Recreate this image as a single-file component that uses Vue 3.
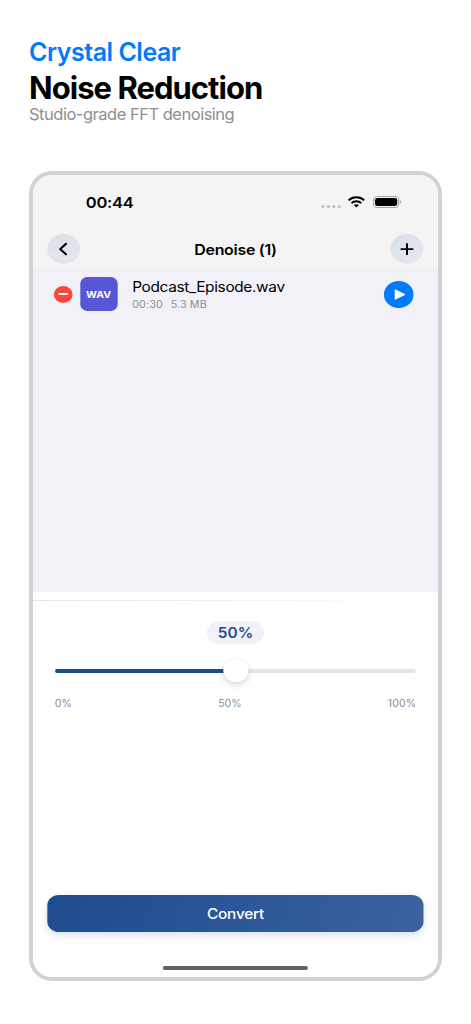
<script setup>
import { ref } from 'vue'

const files = ref([{ name: 'Podcast_Episode.wav', type: 'WAV', time: '00:30', size: '5.3 MB' }])
const level = ref(50)
</script>

<template>
  <main class="page">
    <header class="intro">
      <div class="eyebrow"><span>Crystal Clear</span></div>
      <h1><span>Noise Reduction</span></h1>
      <p><span>Studio-grade FFT denoising</span></p>
    </header>

    <div class="device">
      <div class="screen">
        <section class="top">
          <div class="status">
            <span class="clock">00:44</span>
            <div class="indicators">
              <div class="dots"><i v-for="n in 4" :key="n"></i></div>
              <svg class="wifi" viewBox="0 0 17 12" fill="none" stroke="#000" stroke-width="2.1">
                <path d="M1 4.6C5.1.2 11.9.2 16 4.6" />
                <path d="M3.8 7.5C6.4 4.8 10.6 4.8 13.2 7.5" />
                <path d="M6 9.5C7.4 8.2 9.6 8.2 11 9.5L8.5 12Z" fill="#000" stroke="none" />
              </svg>
              <svg class="battery" viewBox="0 0 26 12">
                <rect x=".5" y=".5" width="23" height="11" rx="3.6" fill="none" stroke="#a5a5a5" />
                <rect x="1.9" y="1.9" width="20.2" height="8.2" rx="2.3" fill="#000" />
                <path d="M24.5 4.1c1.5.5 1.5 3.3 0 3.8Z" fill="#a5a5a5" />
              </svg>
            </div>
          </div>
          <nav class="nav">
            <button class="round" aria-label="Back">
              <svg viewBox="0 0 30 30"><path d="M17 9.8 11.7 15.1l5.3 5.1" /></svg>
            </button>
            <span class="title">Denoise ({{ files.length }})</span>
            <button class="round plus" aria-label="Add">
              <svg viewBox="0 0 30 30"><path d="M15 9.9v10.4M9.9 15.1h10.2" /></svg>
            </button>
          </nav>
        </section>

        <section class="list">
          <div v-for="file in files" :key="file.name" class="row">
            <span class="remove"><i></i></span>
            <span class="badge">{{ file.type }}</span>
            <div class="info">
              <span class="name">{{ file.name }}</span>
              <div class="meta"><span>{{ file.time }}</span><span>{{ file.size }}</span></div>
            </div>
            <svg class="play" viewBox="0 0 27 27">
              <circle cx="13.5" cy="13.5" r="13.5" fill="#007aff" />
              <path d="M10.4 8.9v9.2l8.3-4.6Z" fill="#fff" stroke="#fff" stroke-width="1.2" stroke-linejoin="round" />
            </svg>
          </div>
        </section>

        <section class="panel">
          <div class="rule"></div>
          <div class="value">{{ level }}%</div>
          <div class="slider">
            <div class="fill" :style="{ width: level + '%' }"></div>
            <div class="thumb"></div>
          </div>
          <div class="scale"><span>0%</span><span>50%</span><span>100%</span></div>
          <button class="convert">Convert</button>
          <div class="home"></div>
        </section>
      </div>
    </div>
  </main>
</template>

<style>
body { background: #fff; }
</style>

<style scoped>
* { box-sizing: border-box; }
.page {
  width: 471px;
  height: 1024px;
  overflow: hidden;
  background: #fff;
  font-family: Inter, "Liberation Sans", sans-serif;
  color: #000;
}
.intro { height: 171px; padding: 36px 29px 0; white-space: nowrap; }
.eyebrow { height: 32px; line-height: 32px; font-size: 25px; font-weight: 600; letter-spacing: -.49px; color: #007aff; }
h1 { margin: 0; height: 40px; line-height: 40px; font-size: 31px; font-weight: 700; letter-spacing: -.97px; }
p { margin: -4px 0 0; height: 20px; line-height: 20px; font-size: 16.5px; letter-spacing: -.49px; color: #8e8e93; }

.device {
  width: 413px;
  height: 810px;
  margin-left: 29px;
  border: 4px solid #d1d1d6;
  border-radius: 23px;
  overflow: hidden;
}
/* The screen is laid out at 368px and widened to fill the frame. */
.screen {
  display: flex;
  flex-direction: column;
  width: 368.2px;
  height: 802px;
  transform: scaleX(1.1);
  transform-origin: left;
}
.top { height: 95.5px; background: #f4f4f4; border-bottom: 1px solid #eeeef2; }
.status { display: flex; justify-content: space-between; height: 58px; padding: 0 33.4px 0 48px; }
.clock { margin-top: 18px; font-size: 15px; line-height: 20px; font-weight: 600; letter-spacing: -.25px; }
.indicators { display: flex; align-items: center; height: 12px; margin-top: 21px; }
.dots { display: flex; gap: 2px; margin: 9px 6.6px 0 0; }
.dots i { width: 3px; height: 3.3px; border-radius: 50%; background: #c3c3c5; }
.wifi { width: 16px; height: 11.5px; margin-right: 6.5px; }
.battery { width: 26px; height: 12px; }
.nav { display: flex; justify-content: space-between; align-items: center; height: 32px; padding: 0 13px; }
.round { width: 30px; height: 30px; padding: 0; border: 0; border-radius: 50%; background: linear-gradient(145deg, #dae0e8, #e6e9ee); }
.round svg { display: block; width: 30px; height: 30px; fill: none; stroke: #000; stroke-width: 2; stroke-linecap: round; stroke-linejoin: round; }
.plus svg { stroke-width: 1.8; }
.title { font-size: 14.5px; font-weight: 600; letter-spacing: -.27px; }

.list { height: 321px; background: #f2f1f7; }
.row { display: flex; align-items: center; height: 47px; padding: 0 22px 0 19.3px; }
.remove { display: grid; place-items: center; width: 17px; height: 17px; border-radius: 50%; background: #ff453a; }
.remove i { width: 8.8px; height: 1.5px; border-radius: 1px; background: #fff; }
.badge { display: grid; place-items: center; width: 34px; height: 34px; margin-left: 6.4px; border-radius: 6.5px; background: #5856d6; color: #fff; font-size: 9.6px; font-weight: 700; }
.info { flex: 1; margin: 2px 0 0 13.5px; }
.name { display: block; font-size: 14px; line-height: 18px; letter-spacing: -.31px; }
.meta { display: flex; gap: 7.2px; font-size: 9.8px; line-height: 15px; margin-top: 1px; letter-spacing: .08px; color: #8e8e93; }
.play { width: 27px; height: 27px; }

.panel { display: flex; flex-direction: column; flex: 1; padding: 0 13.2px; background: #fff; }
.rule { height: 1px; margin: 8px -13.2px 20px; background: linear-gradient(90deg, #dee9f4, #eff0f9 50%, #fff 90%); }
.value { align-self: center; width: 52px; height: 23px; border-radius: 12px; background: #f2f1f7; color: #1e4b8f; font-size: 14px; line-height: 23px; font-weight: 600; text-align: center; }
.slider { position: relative; height: 3.6px; margin: 25.5px 7px 0; border-radius: 2px; background: #e4e4e5; }
.fill { height: 100%; border-radius: 2px; background: #1e4b8f; }
.thumb { position: absolute; left: calc(50% - 11.5px); top: -10.5px; width: 23px; height: 23px; border-radius: 50%; background: #fff; box-shadow: 0 3px 6px rgba(0, 0, 0, .14), 0 0 2px rgba(0, 0, 0, .08); }
.scale { display: flex; justify-content: space-between; margin: 23.5px 6.7px 0; font-size: 9.7px; line-height: 15px; color: #8e8e93; }
.convert { height: 37px; margin-top: 183.5px; padding: 0; border: 0; border-radius: 10.5px; background: linear-gradient(110deg, #1e4b8f, #3b629f); box-shadow: 0 3px 8px rgba(30, 75, 143, .18); color: #fff; font: 500 14px/37px Inter, sans-serif; letter-spacing: -.2px; }
.home { align-self: center; width: 132px; height: 4px; margin-top: 34px; border-radius: 2px; background: #626264; }
</style>
